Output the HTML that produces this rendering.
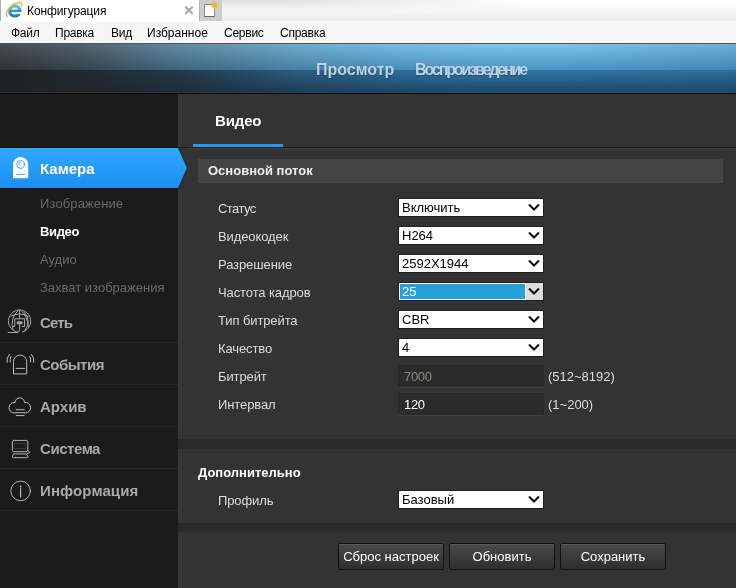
<!DOCTYPE html>
<html lang="ru">
<head>
<meta charset="utf-8">
<title>Конфигурация</title>
<style>
*{box-sizing:border-box;margin:0;padding:0}
html,body{width:736px;height:588px;overflow:hidden;background:#333;font-family:"Liberation Sans",sans-serif}
body{position:relative}
.abs{position:absolute}
/* browser chrome */
#tabbar{left:0;top:0;width:736px;height:21px;background:linear-gradient(#fff 0,#f9f9f9 40%,#ededed 100%)}
#tabshade{left:222px;top:0;width:300px;height:12px;background:linear-gradient(#dedede,rgba(240,240,240,0));-webkit-mask-image:linear-gradient(to right,#000 0,#000 60px,transparent 100%);mask-image:linear-gradient(to right,#000 0,#000 60px,transparent 100%)}
#tab{left:0;top:0;width:199px;height:22px;background:#fff}
#tabtitle{left:27px;top:3px;font-size:12px;color:#000;line-height:16px;white-space:nowrap;letter-spacing:-.1px}
#tabx{left:184px;top:5px;width:10px;height:10px}
#newtab{left:199px;top:0;width:23px;height:21px;background:#cdcdcd}
#menubar{left:0;top:21px;width:736px;height:23px;background:#f6f6f6;border-top:1px solid #fdfdfd;border-bottom:1px solid #4c545c}
#menubar span{position:absolute;top:3px;font-size:12px;line-height:16px;color:#000;white-space:nowrap;letter-spacing:-.25px}
/* header */
#header{left:0;top:44px;width:736px;height:50px;background:#1d3e58}
.hs{left:0;width:736px}
.htxt{top:60px;font-size:16px;font-weight:bold;color:#bfd3e3;line-height:20px;white-space:nowrap;text-shadow:0 1px 1px rgba(20,50,80,.5)}
/* sidebar */
#sidebar{left:0;top:94px;width:178px;height:494px;background:#1b1b1b}
#content{left:178px;top:94px;width:558px;height:494px;background:#333}
.nav{position:absolute;left:0;width:178px;height:41px;border-bottom:1px solid #272727}
.nav b{position:absolute;left:40px;top:11px;font-size:15px;line-height:20px;color:#a9a9a9;white-space:nowrap}
.sub{position:absolute;left:40px;font-size:13px;line-height:16px;color:#6a6a6a;white-space:nowrap}
.lbl{position:absolute;left:218px;font-size:13px;line-height:16px;color:#dcdcdc;white-space:nowrap;letter-spacing:-.1px}
.sel{position:absolute;left:398px;width:146px;height:19px;background:#fff;border:1px solid #1f1f1f;font-size:13px;line-height:17px;color:#000;padding-left:3px;white-space:nowrap}
.sel svg{position:absolute;right:3px;top:4px}
.inp{position:absolute;left:398px;width:146px;height:23px;background:#2b2b2b;border:1px solid #292929;border-top-color:#262626;border-bottom-color:#414141;font-size:13px;line-height:21px;color:#fff;padding-left:5px;letter-spacing:-.3px}
.hint{position:absolute;left:548px;font-size:13px;line-height:16px;color:#ddd;white-space:nowrap}
.btn{position:absolute;top:543px;width:106px;height:27px;border:1px solid #111;border-radius:2px;background:linear-gradient(#4a4a4a,#2e2e2e);color:#fff;font-size:13px;line-height:25px;text-align:center;white-space:nowrap;box-shadow:inset 0 1px 0 #5a5a5a}
</style>
</head>
<body><div id="wrap" style="position:absolute;left:0;top:0;width:736px;height:588px;will-change:transform">
<!-- browser tab bar -->
<div id="tabbar" class="abs"></div>
<div id="tabshade" class="abs"></div>
<div id="tab" class="abs"></div>
<svg class="abs" style="left:4px;top:0" width="20" height="20" viewBox="4 0 20 20">
  <defs><linearGradient id="ieg" x1="0" y1="0" x2="0" y2="1"><stop offset="0" stop-color="#58c1f2"/><stop offset="1" stop-color="#1b7fd3"/></linearGradient></defs>
  <circle cx="14.8" cy="10.9" r="5.1" fill="none" stroke="url(#ieg)" stroke-width="3.2"/>
  <path d="M15 11.6 H23 V14.2 L19 14.2 Z" fill="#fff"/>
  <rect x="10.2" y="9.7" width="11.3" height="2.4" fill="#2d94de"/>
  <path d="M7.2 16.6 C4.8 13.4 8 8 12.6 5 C16.6 2.4 20.6 2 21.6 3.2 C22.3 4.2 21.8 5.4 21.2 6.2" fill="none" stroke="#f4b82c" stroke-width="1.5" stroke-linecap="round"/>
</svg>
<div id="tabtitle" class="abs">Конфигурация</div>
<svg id="tabx" class="abs" viewBox="0 0 10 10"><path d="M1.3 1.8 L8.7 8.8 M8.7 1.8 L1.3 8.8" stroke="#a2a2a2" stroke-width="1.9" fill="none"/></svg>
<div id="newtab" class="abs"></div>
<div class="abs" style="left:0;top:0;width:1px;height:21px;background:#adadad"></div>
<svg class="abs" style="left:199px;top:0" width="24" height="21" viewBox="199 0 24 21">
  <rect x="199" y="0" width="1" height="21" fill="#b4b4b4"/>
  <rect x="204.5" y="4.5" width="10" height="12" fill="#fff" stroke="#8c8c8c" stroke-width="1"/>
  <path d="M204.5 16.5 H214.5" stroke="#666" stroke-width="1"/>
  <circle cx="214.4" cy="5.3" r="2.4" fill="#fbbf3a"/>
  <path d="M214.4 1.6 V9 M210.7 5.3 H218.1 M211.8 2.7 L217 7.9 M217 2.7 L211.8 7.9" stroke="#f9b529" stroke-width="1.1" fill="none"/>
</svg>
<div id="menubar" class="abs">
  <span style="left:11px">Файл</span>
  <span style="left:55px">Правка</span>
  <span style="left:111px">Вид</span>
  <span style="left:147px;letter-spacing:0">Избранное</span>
  <span style="left:224px">Сервис</span>
  <span style="left:280px">Справка</span>
</div>

<!-- app header -->
<div id="header" class="abs">
  <div class="abs hs" style="top:0;height:26px;background:linear-gradient(#7ac6ec,#4c93c1)"></div>
  <div class="abs hs" style="top:0;height:26px;background:linear-gradient(#494b4f,#2e3033);-webkit-mask-image:linear-gradient(to right,rgba(0,0,0,1) 0,rgba(0,0,0,.82) 80px,rgba(0,0,0,.47) 180px,rgba(0,0,0,.2) 300px,rgba(0,0,0,.06) 400px,rgba(0,0,0,0) 480px);mask-image:linear-gradient(to right,rgba(0,0,0,1) 0,rgba(0,0,0,.82) 80px,rgba(0,0,0,.47) 180px,rgba(0,0,0,.2) 300px,rgba(0,0,0,.06) 400px,rgba(0,0,0,0) 480px)"></div>
  <div class="abs hs" style="top:26px;height:23px;background:linear-gradient(#2f78a8,#1e4465)"></div>
  <div class="abs hs" style="top:26px;height:23px;background:linear-gradient(#1f2124,#202225);-webkit-mask-image:linear-gradient(to right,rgba(0,0,0,1) 0,rgba(0,0,0,.92) 80px,rgba(0,0,0,.72) 180px,rgba(0,0,0,.27) 300px,rgba(0,0,0,.08) 400px,rgba(0,0,0,0) 480px);mask-image:linear-gradient(to right,rgba(0,0,0,1) 0,rgba(0,0,0,.92) 80px,rgba(0,0,0,.72) 180px,rgba(0,0,0,.27) 300px,rgba(0,0,0,.08) 400px,rgba(0,0,0,0) 480px)"></div>
  <div class="abs hs" style="top:0;height:49px;background:linear-gradient(to right,rgba(30,60,100,0) 560px,rgba(30,60,100,.16) 736px)"></div>
  <div class="abs hs" style="top:48px;height:1px;background:rgba(255,255,255,.06)"></div>
  <div class="abs hs" style="top:49px;height:1px;background:#0a0a0a"></div>
</div>
<div class="abs htxt" style="left:316px">Просмотр</div>
<div class="abs htxt" style="left:415px;letter-spacing:-2.13px">Воспроизведение</div>

<!-- sidebar -->
<div id="sidebar" class="abs"></div>
<div id="content" class="abs"></div>
<div class="abs" style="left:178px;top:94px;width:4px;height:494px;background:#363636"></div>

<div class="abs" style="left:0;top:147px;width:178px;height:42px;background:#101010"></div>
<div class="abs" style="left:0;top:148px;width:178px;height:40px;background:linear-gradient(#2fa9ff,#1c8df0)"></div>
<svg class="abs" style="left:178px;top:147px" width="11" height="42" viewBox="0 0 11 42"><defs><linearGradient id="arg" x1="0" y1="0" x2="0" y2="1"><stop offset="0" stop-color="#2fa9ff"/><stop offset="1" stop-color="#1c8df0"/></linearGradient></defs><path d="M0 0 L1 0 L10 21 L1 42 L0 42 Z" fill="#13273b"/><path d="M0 1 L9 21 L0 41 Z" fill="url(#arg)"/></svg>
<div class="abs" style="left:40px;top:159px;font-size:15px;font-weight:bold;color:#fff;line-height:20px">Камера</div>

<svg class="abs" style="left:0;top:140px" width="50" height="380" viewBox="0 140 50 380" fill="none" stroke-linecap="round" stroke-linejoin="round">
  <!-- camera -->
  <path d="M13 178.2 V164.6 a7.6 7.6 0 0 1 15.2 0 V178.2 Z" fill="#fff"/>
  <circle cx="20.5" cy="164.5" r="3.9" stroke="#2a9cf5" stroke-width="0.9"/>
  <path d="M18.7 164.2 a2 2 0 0 1 1.9 -2" stroke="#2a9cf5" stroke-width="0.8"/>
  <line x1="16.4" y1="174.4" x2="24.9" y2="174.4" stroke="#2a9cf5" stroke-width="0.9"/>
  <!-- globe / network -->
  <g stroke="#a8a8a8" stroke-width="1">
    <path d="M17.5 332.2 A11.2 11.2 0 1 1 22.5 332"/>
    <path d="M10.8 316.2 Q19.6 311.5 28.2 316.4"/>
    <path d="M19.6 310 V318.6"/>
    <path d="M17.6 311.2 Q10 318 12.8 329.5"/>
    <path d="M21.6 311.2 Q27.5 316 28.3 327"/>
    <path d="M24.6 312.6 Q32 321 24.6 331"/>
    <path d="M12.4 326.5 H14.8 V318.8 H24.5 V326.5 H22"/>
    <path d="M8.2 332.5 H17 Q19.6 332.3 19.6 329.5 V324"/>
  </g>
  <rect x="16.8" y="321.3" width="5.7" height="2.9" fill="#a8a8a8"/>
  <!-- alarm -->
  <g stroke="#bdbdbd" stroke-width="1">
    <path d="M13.5 373.5 V361.7 a6.6 6.6 0 0 1 13.2 0 V373.5 Z"/>
    <path d="M16.2 368.4 H24.4"/>
    <path d="M11 356.4 Q9.4 359 10.2 362"/>
    <path d="M9.3 354.3 Q6.4 358 7 362.3"/>
    <path d="M29.8 356.4 Q31.4 359 30.6 362"/>
    <path d="M31.5 354.3 Q34.4 358 33.8 362.3"/>
  </g>
  <!-- cloud -->
  <g stroke="#bdbdbd" stroke-width="1">
    <path d="M16 412.9 H14.2 A5.2 5.2 0 1 1 15.09 402.58 A4.7 4.7 0 1 1 24.51 402.58 A5.2 5.2 0 1 1 25.4 412.9 H24.4"/>
    <path d="M16.2 409.7 H24.2 M16.2 412.7 H24.2 M16.2 415.6 H24.2"/>
  </g>
  <!-- computer -->
  <g stroke="#b4b4b4" stroke-width="1">
    <rect x="12.3" y="440.4" width="15.5" height="11.3" rx="1.6"/>
    <path d="M14 453.9 H26.4 L27.9 456.6 Q28.1 457.7 26.9 457.7 H13.3 Q12.1 457.7 12.4 456.6 Z"/>
    <path d="M27.8 450.6 L29.7 452.2 L27 453.9"/>
  </g>
  <rect x="14.5" y="443.5" width="11" height="5" stroke="#383838" stroke-width="1"/>
  <!-- info -->
  <g stroke="#b4b4b4">
    <circle cx="20.6" cy="490.9" r="9.8" stroke-width="1"/>
    <path d="M20.6 488.6 V497" stroke-width="1.2"/>
  </g>
  <circle cx="20.6" cy="486.5" r="0.9" fill="#b4b4b4"/>
</svg>
<div class="sub" style="top:196px;letter-spacing:.12px">Изображение</div>
<div class="sub" style="top:224px;color:#fff;font-weight:bold;letter-spacing:-.35px">Видео</div>
<div class="sub" style="top:252px">Аудио</div>
<div class="sub" style="top:280px">Захват изображения</div>

<div class="nav" style="top:302px"><b style="letter-spacing:-.85px">Сеть</b></div>
<div class="nav" style="top:344px"><b style="letter-spacing:-.5px">События</b></div>
<div class="nav" style="top:386px"><b>Архив</b></div>
<div class="nav" style="top:428px"><b style="letter-spacing:-.45px">Система</b></div>
<div class="nav" style="top:470px"><b style="letter-spacing:.1px">Информация</b></div>

<!-- content -->
<div class="abs" style="left:215px;top:111px;font-size:15px;font-weight:bold;color:#fff;line-height:20px;letter-spacing:-.15px">Видео</div>
<div class="abs" style="left:193px;top:144px;width:90px;height:3px;background:#2b95e8"></div>
<div class="abs" style="left:178px;top:147px;width:558px;height:1px;background:#1e1e1e"></div>
<div class="abs" style="left:187px;top:148px;width:549px;height:1px;background:#414141"></div>

<div class="abs" style="left:198px;top:159px;width:525px;height:24px;background:#444;border-bottom:1px solid #4a4a4a"></div>
<div class="abs" style="left:208px;top:163px;font-size:13px;font-weight:bold;color:#eee;line-height:16px">Основной поток</div>

<div class="lbl" style="top:201px;letter-spacing:-.55px">Статус</div>
<div class="lbl" style="top:229px">Видеокодек</div>
<div class="lbl" style="top:257px">Разрешение</div>
<div class="lbl" style="top:285px">Частота кадров</div>
<div class="lbl" style="top:313px">Тип битрейта</div>
<div class="lbl" style="top:341px">Качество</div>
<div class="lbl" style="top:369px">Битрейт</div>
<div class="lbl" style="top:397px">Интервал</div>

<div class="sel" style="top:198px">Включить<svg width="12" height="9" viewBox="0 0 12 9"><path d="M1 1.5 L6 6.5 L11 1.5" stroke="#0a0a0a" stroke-width="2" fill="none"/></svg></div>
<div class="sel" style="top:226px">H264<svg width="12" height="9" viewBox="0 0 12 9"><path d="M1 1.5 L6 6.5 L11 1.5" stroke="#0a0a0a" stroke-width="2" fill="none"/></svg></div>
<div class="sel" style="top:254px">2592X1944<svg width="12" height="9" viewBox="0 0 12 9"><path d="M1 1.5 L6 6.5 L11 1.5" stroke="#0a0a0a" stroke-width="2" fill="none"/></svg></div>
<div class="sel" style="top:282px;color:#fff"><span class="abs" style="left:1px;top:1px;width:125px;height:15px;background:#26a0da"></span><span class="abs" style="left:127px;top:0;width:17px;height:17px;background:#ddd"></span><span style="position:relative">25</span><svg width="12" height="9" viewBox="0 0 12 9"><path d="M1 1.5 L6 6.5 L11 1.5" stroke="#0a0a0a" stroke-width="2" fill="none"/></svg></div>
<div class="sel" style="top:310px">CBR<svg width="12" height="9" viewBox="0 0 12 9"><path d="M1 1.5 L6 6.5 L11 1.5" stroke="#0a0a0a" stroke-width="2" fill="none"/></svg></div>
<div class="sel" style="top:338px">4<svg width="12" height="9" viewBox="0 0 12 9"><path d="M1 1.5 L6 6.5 L11 1.5" stroke="#0a0a0a" stroke-width="2" fill="none"/></svg></div>

<div class="inp" style="top:365px;color:#8a8a82">7000</div>
<div class="hint" style="top:369px">(512~8192)</div>
<div class="inp" style="top:393px">120</div>
<div class="hint" style="top:397px">(1~200)</div>

<div class="abs" style="left:178px;top:439px;width:558px;height:10px;background:#2a2a2a"></div>
<div class="abs" style="left:198px;top:465px;font-size:13px;font-weight:bold;color:#fff;line-height:16px">Дополнительно</div>
<div class="lbl" style="top:493px">Профиль</div>
<div class="sel" style="top:490px">Базовый<svg width="12" height="9" viewBox="0 0 12 9"><path d="M1 1.5 L6 6.5 L11 1.5" stroke="#0a0a0a" stroke-width="2" fill="none"/></svg></div>
<div class="abs" style="left:178px;top:523px;width:558px;height:9px;background:#2a2a2a"></div>

<div class="btn" style="left:338px">Сброс настроек</div>
<div class="btn" style="left:449px">Обновить</div>
<div class="btn" style="left:560px">Сохранить</div>
</div></body>
</html>
